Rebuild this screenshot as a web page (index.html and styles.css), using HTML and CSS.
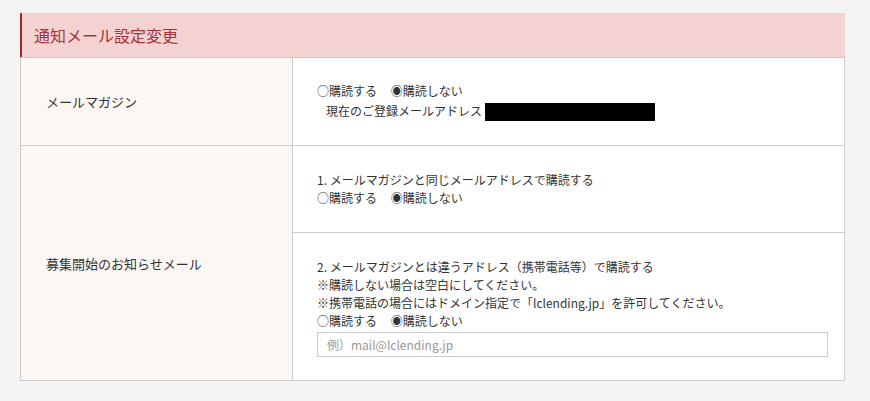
FILE: index.html
```html
<!DOCTYPE html>
<html lang="ja">
<head>
    <meta charset="UTF-8">
    <meta name="viewport" content="width=device-width, initial-scale=1.0">
    <title>通知メール設定変更</title>
    <link rel="stylesheet" href="styles.css">
</head>
<body>
    <div class="container">
        <h2 class="section-title">通知メール設定変更</h2>

        <table class="setting-table">
            <tr class="row-magazine">
                <th>メールマガジン</th>
                <td>
                    <div class="cell-inner">
                        <div class="radio-line">
                            <span class="radio-item">○購読する</span>
                            <span class="radio-item">◉購読しない</span>
                        </div>
                        <div class="address-line">
                            現在のご登録メールアドレス：<span class="masked"></span>
                        </div>
                    </div>
                </td>
            </tr>
            <tr class="row-notice">
                <th>募集開始のお知らせメール</th>
                <td class="split-cell">
                    <div class="sub-cell sub-first">
                        <div>1. メールマガジンと同じメールアドレスで購読する</div>
                        <div class="radio-line">
                            <span class="radio-item">○購読する</span>
                            <span class="radio-item">◉購読しない</span>
                        </div>
                    </div>
                    <div class="sub-cell sub-second">
                        <div>2. メールマガジンとは違うアドレス（携帯電話等）で購読する</div>
                        <div>※購読しない場合は空白にしてください。</div>
                        <div>※携帯電話の場合にはドメイン指定で「lclending.jp」を許可してください。</div>
                        <div class="radio-line">
                            <span class="radio-item">○購読する</span>
                            <span class="radio-item">◉購読しない</span>
                        </div>
                        <input class="form-control" type="text" placeholder="例）mail@lclending.jp">
                    </div>
                </td>
            </tr>
        </table>
    </div>
</body>
</html>
```

FILE: styles.css
```css
html, body {
    margin: 0;
    padding: 0;
    background-color: #f4f4f4;
    font-family: "Noto Sans CJK JP", "Noto Sans", sans-serif;
    color: #333;
}

.container {
    width: 825px;
    margin: 13px 0 0 20px;
}

.section-title {
    margin: 0;
    height: 44px;
    line-height: 44px;
    padding-left: 12px;
    background-color: #f4d2d2;
    border-left: 2px solid #a3252a;
    color: #a3353a;
    font-size: 16px;
    font-weight: normal;
    box-sizing: border-box;
}

.setting-table {
    width: 100%;
    border-collapse: collapse;
    background-color: #fff;
}

.setting-table th,
.setting-table td {
    border: 1px solid #ccc;
    padding: 0;
    vertical-align: middle;
}

.setting-table th {
    width: 272px;
    background-color: #fcf7f3;
    text-align: left;
    font-weight: normal;
    font-size: 13px;
    padding-left: 25px;
    box-sizing: border-box;
}

.setting-table td {
    font-size: 12px;
    line-height: 18px;
}

.row-magazine {
    height: 88px;
}

.row-notice {
    height: 235px;
}

.cell-inner {
    padding-left: 24px;
}

.radio-item {
    margin-right: 11px;
}

.address-line {
    padding-left: 9px;
    margin-top: 2px;
}

.masked {
    display: inline-block;
    width: 170px;
    height: 18px;
    background-color: #000;
    vertical-align: middle;
    margin-left: -9px;
}

.split-cell {
    vertical-align: top;
}

.sub-cell {
    display: flex;
    flex-direction: column;
    justify-content: center;
    padding-left: 24px;
    box-sizing: border-box;
}

.sub-first {
    height: 87px;
    border-bottom: 1px solid #ccc;
}

.sub-second {
    height: 147px;
    padding-top: 2px;
}

.form-control {
    width: 511px;
    height: 25px;
    margin-top: 2px;
    padding: 0 9px;
    border: 1px solid #ccc;
    font-family: "Noto Sans CJK JP", "Noto Sans", sans-serif;
    font-size: 12px;
    color: #333;
    box-sizing: border-box;
}

.form-control::placeholder {
    color: #999;
}
```
